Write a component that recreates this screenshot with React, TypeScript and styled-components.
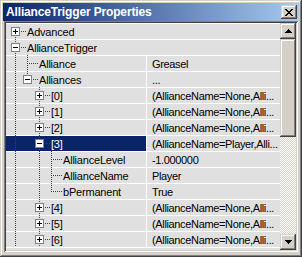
import styled, { createGlobalStyle } from "styled-components";

const FACE = "#d4d0c8";
const ROW_BG = "#e0e0e0";
const DOT = "#404040";
const NAVY = "#0a246a";

const GlobalStyle = createGlobalStyle`
  html, body {
    margin: 0;
    padding: 0;
    background: ${FACE};
  }
  body {
    font-family: "Liberation Sans", Arial, sans-serif;
  }
`;

type Node = {
  label: string;
  value?: string;
  level: number;
  kind: "open" | "closed" | "leaf";
  guides: boolean[];
  top: boolean;
  bottom: boolean;
  category?: boolean;
  selected?: boolean;
};

const NONE = "(AllianceName=None,Alli...";

const entry = (label: string, value = NONE): Node => ({
  label,
  value,
  level: 2,
  kind: "closed",
  guides: [true, false],
  top: true,
  bottom: true,
});

const field = (label: string, value: string): Node => ({
  label,
  value,
  level: 3,
  kind: "leaf",
  guides: [true, false, true],
  top: true,
  bottom: true,
});

const rows: Node[] = [
  { label: "Advanced", level: 0, kind: "closed", guides: [], top: false, bottom: true, category: true },
  { label: "AllianceTrigger", level: 0, kind: "open", guides: [], top: true, bottom: true, category: true },
  { label: "Alliance", value: "Greasel", level: 1, kind: "leaf", guides: [true], top: true, bottom: true },
  { label: "Alliances", value: "...", level: 1, kind: "open", guides: [true], top: true, bottom: false },
  entry("[0]"),
  entry("[1]"),
  entry("[2]"),
  { ...entry("[3]", "(AllianceName=Player,Alli..."), kind: "open", selected: true },
  field("AllianceLevel", "-1.000000"),
  field("AllianceName", "Player"),
  { ...field("bPermanent", "True"), bottom: false },
  entry("[4]"),
  entry("[5]"),
  entry("[6]"),
];

// dotted tree connector pieces
const vDots = (x: number, y: number, h: number) =>
  `repeating-linear-gradient(to bottom, ${DOT} 0 1px, transparent 1px 2px) ${x}px ${y}px / 1px ${h}px no-repeat`;
const hDots = (x: number, y: number, w: number) =>
  `repeating-linear-gradient(to right, ${DOT} 0 1px, transparent 1px 2px) ${x}px ${y}px / ${w}px 1px no-repeat`;

const raised = `
  box-shadow: inset -1px -1px #404040, inset 1px 1px ${FACE},
    inset -2px -2px #808080, inset 2px 2px #ffffff;
`;

const S = {
  Window: styled.div`
    width: 302px;
    height: 257px;
    box-sizing: border-box;
    padding: 3px;
    display: flex;
    flex-direction: column;
    background: ${FACE};
    ${raised}
  `,

  TitleBar: styled.div`
    height: 18px;
    flex-shrink: 0;
    display: flex;
    align-items: center;
    justify-content: space-between;
    padding: 0 2px 0 3px;
    background: linear-gradient(to right, #0a246a, #a6caf0);
  `,

  Title: styled.span`
    color: #ffffff;
    font-size: 12px;
    font-weight: bold;
    letter-spacing: -0.15px;
    line-height: 18px;
    white-space: nowrap;
  `,

  CloseButton: styled.div`
    width: 16px;
    height: 14px;
    display: flex;
    align-items: center;
    justify-content: center;
    background: ${FACE};
    ${raised}
  `,

  Grid: styled.div`
    flex: 1;
    margin: 0 1px 2px;
    padding: 2px;
    display: flex;
    overflow: hidden;
    background: ${FACE};
    box-shadow: inset 1px 1px #808080, inset -1px -1px #ffffff,
      inset 2px 2px #404040, inset -2px -2px ${FACE};
  `,

  Rows: styled.div`
    flex: 1;
    min-width: 0;
    display: flex;
    flex-direction: column;
    overflow: hidden;
    background: ${ROW_BG};
  `,

  Row: styled.div`
    height: 16px;
    flex-shrink: 0;
    display: flex;
    background: ${ROW_BG};
    box-shadow: inset 0 1px #ffffff;
  `,

  NameCell: styled.div<{ $selected?: boolean }>`
    width: 140px;
    flex-shrink: 0;
    box-sizing: border-box;
    padding-left: 3px;
    display: flex;
    color: ${({ $selected }) => ($selected ? "#ffffff" : "#000000")};
    background: ${({ $selected }) =>
      $selected ? `linear-gradient(${NAVY}, ${NAVY}) 0 1px / 100% 15px no-repeat` : "none"};
  `,

  Guide: styled.span<{ $line: boolean }>`
    width: 12px;
    height: 16px;
    flex-shrink: 0;
    background: ${({ $line }) => ($line ? vDots(6, 0, 16) : "none")};
  `,

  Joint: styled.span<{ $top: boolean; $bottom: boolean }>`
    position: relative;
    width: 18px;
    height: 16px;
    flex-shrink: 0;
    background: ${({ $top, $bottom }) =>
      [$top && vDots(6, 0, 8), $bottom && vDots(6, 8, 8), hDots(6, 8, 12)]
        .filter(Boolean)
        .join(", ")};
  `,

  Expander: styled.svg`
    position: absolute;
    left: 2px;
    top: 4px;
  `,

  Label: styled.span`
    padding-top: 2px;
    font-size: 11px;
    line-height: 14px;
    letter-spacing: -0.2px;
    white-space: nowrap;
  `,

  ValueCell: styled.div<{ $category?: boolean }>`
    flex: 1;
    min-width: 0;
    padding: 2px 0 0 5px;
    border-left: 1px solid ${({ $category }) => ($category ? "transparent" : "#ffffff")};
    font-size: 11px;
    line-height: 14px;
    letter-spacing: -0.35px;
    color: #000000;
    white-space: nowrap;
    overflow: hidden;
  `,

  Scrollbar: styled.div`
    width: 16px;
    flex-shrink: 0;
    display: flex;
    flex-direction: column;
  `,

  ScrollButton: styled.div`
    height: 16px;
    flex-shrink: 0;
    display: flex;
    align-items: center;
    justify-content: center;
    background: ${FACE};
    ${raised}
  `,

  Thumb: styled.div`
    height: 98px;
    flex-shrink: 0;
    background: ${FACE};
    ${raised}
  `,

  Track: styled.div`
    flex: 1;
    background: repeating-conic-gradient(#ffffff 0 25%, ${FACE} 0 50%) 0 0 / 2px 2px;
  `,
};

const CloseGlyph = () => (
  <svg width="8" height="7" viewBox="0 0 8 7" shapeRendering="crispEdges">
    <path
      d="M0 0h2v1H0zM6 0h2v1H6zM1 1h2v1H1zM5 1h2v1H5zM2 2h4v1H2zM3 3h2v1H3zM2 4h4v1H2zM1 5h2v1H1zM5 5h2v1H5zM0 6h2v1H0zM6 6h2v1H6z"
      fill="#000"
    />
  </svg>
);

const Arrow = ({ down }: { down?: boolean }) => (
  <svg
    width="7"
    height="4"
    viewBox="0 0 7 4"
    shapeRendering="crispEdges"
    style={down ? { transform: "scaleY(-1)" } : undefined}
  >
    <path d="M3 0h1v1H3zM2 1h3v1H2zM1 2h5v1H1zM0 3h7v1H0z" fill="#000" />
  </svg>
);

const Expander = ({ open }: { open: boolean }) => (
  <S.Expander width="9" height="9" viewBox="0 0 9 9" shapeRendering="crispEdges">
    <rect x="0.5" y="0.5" width="8" height="8" fill="#fff" stroke="#808080" />
    <path d="M2 4h5v1H2z" fill="#000" />
    {!open && <path d="M4 2h1v5H4z" fill="#000" />}
  </S.Expander>
);

const TreeRow = ({ node }: { node: Node }) => (
  <S.Row>
    <S.NameCell $selected={node.selected}>
      {node.guides.map((line, i) => (
        <S.Guide key={i} $line={line} />
      ))}
      <S.Joint $top={node.top} $bottom={node.bottom}>
        {node.kind !== "leaf" && <Expander open={node.kind === "open"} />}
      </S.Joint>
      <S.Label>{node.label}</S.Label>
    </S.NameCell>
    <S.ValueCell $category={node.category}>{node.value}</S.ValueCell>
  </S.Row>
);

const App = () => {
  return (
    <>
      <GlobalStyle />
      <S.Window>
        <S.TitleBar>
          <S.Title>AllianceTrigger Properties</S.Title>
          <S.CloseButton>
            <CloseGlyph />
          </S.CloseButton>
        </S.TitleBar>
        <S.Grid>
          <S.Rows>
            {rows.map((node) => (
              <TreeRow key={node.label} node={node} />
            ))}
            {/* top edge of the next, scrolled-off row */}
            <S.Row />
          </S.Rows>
          <S.Scrollbar>
            <S.ScrollButton>
              <Arrow />
            </S.ScrollButton>
            <S.Thumb />
            <S.Track />
            <S.ScrollButton>
              <Arrow down />
            </S.ScrollButton>
          </S.Scrollbar>
        </S.Grid>
      </S.Window>
    </>
  );
};

export default App;
